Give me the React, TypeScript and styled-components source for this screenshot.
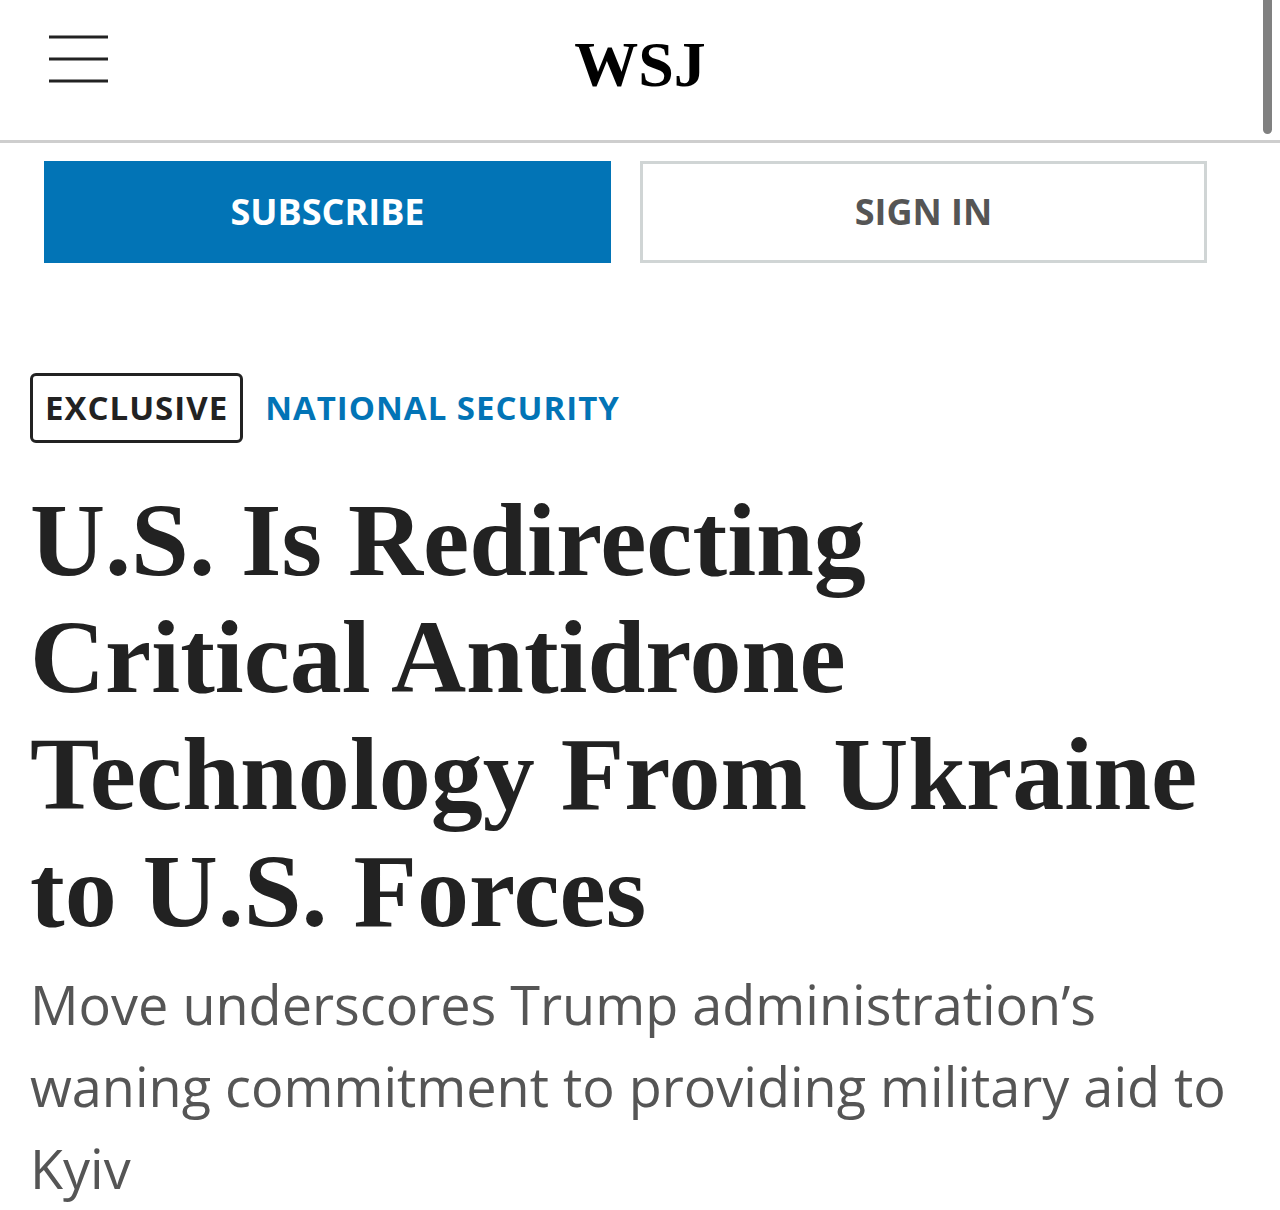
import React from "react";
import styled, { createGlobalStyle } from "styled-components";

const GlobalStyle = createGlobalStyle`
  *, *::before, *::after { box-sizing: border-box; }
  body { margin: 0; background: #fff; color: #222; font-family: "Open Sans", "Noto Sans", sans-serif; }
`;

const Page = styled.div`
  position: relative;
`;

const ScrollThumb = styled.div`
  position: absolute;
  top: 0;
  right: 8px;
  width: 9px;
  height: 134px;
  border-radius: 0 0 5px 5px;
  background: #808080;
`;

const Header = styled.header`
  display: grid;
  grid-template-columns: 1fr auto 1fr;
  align-items: center;
  height: 143px;
  padding: 0 48px 22px;
  border-bottom: 3px solid #cecece;
`;

const MenuButton = styled.button`
  justify-self: start;
  display: flex;
  padding: 0;
  border: 0;
  background: none;
  cursor: pointer;
`;

const Logo = styled.a`
  padding-top: 12px;
  color: #000;
  font: bold 64px/96px "Liberation Serif", serif;
  text-decoration: none;
`;

const Actions = styled.nav`
  display: grid;
  grid-template-columns: 1fr 1fr;
  gap: 29px;
  padding: 18px 73px 0 44px;
`;

const ActionButton = styled.button<{ $primary?: boolean }>`
  height: 102px;
  border: 3px solid ${(p) => (p.$primary ? "#0274b6" : "#d0d5d5")};
  background: ${(p) => (p.$primary ? "#0274b6" : "#fff")};
  color: ${(p) => (p.$primary ? "#fff" : "#555")};
  font: 700 36px/48px "Open Sans", "Noto Sans", sans-serif;
  cursor: pointer;
`;

const Article = styled.main`
  padding: 110px 32px 0 30px;
`;

const Labels = styled.div`
  display: flex;
  align-items: center;
  gap: 22px;
  font: 700 33px/46px "Open Sans", "Noto Sans", sans-serif;
  letter-spacing: 1px;
`;

const Exclusive = styled.span`
  padding: 9px 12px;
  border: 3px solid #222;
  border-radius: 6px;
`;

const Section = styled.a`
  color: #0274b6;
  text-decoration: none;
`;

const Headline = styled.h1`
  margin: 38px 0 0;
  font: bold 104px/117px "Liberation Serif", serif;
`;

const Summary = styled.p`
  margin: 14px 0 0;
  color: #555;
  font: 400 54px/82px "Open Sans", "Noto Sans", sans-serif;
`;

export default function App() {
  return (
    <Page>
      <GlobalStyle />
      <Header>
        <MenuButton type="button" aria-label="Menu">
          <svg width="60" height="48" viewBox="0 0 60 48" stroke="#222" strokeWidth="3">
            <path d="M1 2H60M1 24H60M1 46H60" />
          </svg>
        </MenuButton>
        <Logo href="#">WSJ</Logo>
      </Header>
      <Actions>
        <ActionButton type="button" $primary>SUBSCRIBE</ActionButton>
        <ActionButton type="button">SIGN IN</ActionButton>
      </Actions>
      <Article>
        <Labels>
          <Exclusive>EXCLUSIVE</Exclusive>
          <Section href="#">NATIONAL SECURITY</Section>
        </Labels>
        <Headline>
          U.S. Is Redirecting<br />
          Critical Antidrone<br />
          Technology From Ukraine<br />
          to U.S. Forces
        </Headline>
        <Summary>
          Move underscores Trump administration’s waning commitment to providing military aid to Kyiv
        </Summary>
      </Article>
      <ScrollThumb />
    </Page>
  );
}
